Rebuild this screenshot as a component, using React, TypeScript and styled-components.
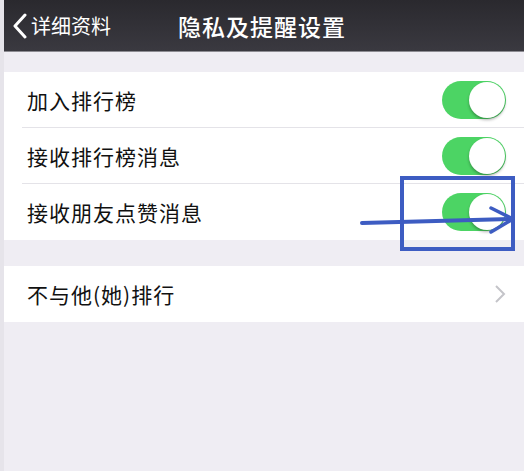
import React from 'react'
import styled, { createGlobalStyle } from 'styled-components'

const Global = createGlobalStyle`
  html, body { margin: 0; padding: 0; background: #efedf3; }
  body { font-family: "Noto Sans CJK SC", "Noto Sans", sans-serif; }
`;

type ToggleItem = { label: string; on: boolean; marked?: boolean };

const toggles: ToggleItem[] = [
    { label: '加入排行榜', on: true },
    { label: '接收排行榜消息', on: true },
    { label: '接收朋友点赞消息', on: true, marked: true },
];

const Switch = ({ on }: { on: boolean }) => (
    <Switch.Track on={on}>
        <Switch.Knob />
    </Switch.Track>
);
Switch.Track = styled.div<{ on: boolean }>`
    width: 64px;
    height: 38px;
    border-radius: 19px;
    background: ${p => (p.on ? '#4cd464' : '#e5e5ea')};
    display: flex;
    justify-content: ${p => (p.on ? 'flex-end' : 'flex-start')};
    align-items: center;
    padding: 1px;
    box-sizing: border-box;
`;
Switch.Knob = styled.div`
    width: 36px;
    height: 36px;
    border-radius: 50%;
    background: #fff;
    box-shadow: 0 2px 3px rgba(0, 0, 0, 0.3);
`;

// blue highlight box + arrow drawn over the third row
const Annotation = () => (
    <Annotation.Box>
        <Annotation.Arrow viewBox="0 0 160 44" width="160" height="44">
            <path d="M2 26 L150 22" stroke="#3d5cc2" strokeWidth="4" strokeLinecap="round" fill="none" />
            <path d="M131 11 L153 22 L131 35" stroke="#3d5cc2" strokeWidth="3.5" strokeLinejoin="round" strokeLinecap="round" fill="none" />
        </Annotation.Arrow>
    </Annotation.Box>
);
Annotation.Box = styled.div`
    position: absolute;
    left: 378px;
    top: -8px;
    width: 115px;
    height: 75px;
    border: 4px solid #3d5cc2;
    box-sizing: border-box;
    pointer-events: none;
`;
Annotation.Arrow = styled.svg`
    position: absolute;
    left: -44px;
    top: 17px;
    overflow: visible;
`;

export default function App() {
    return (
        <>
            <Global />
            <Page>
                <NavBar>
                    <Back>
                        <svg width="16" height="26" viewBox="0 0 16 26">
                            <path d="M13 2 L3 13 L13 24" stroke="#fff" strokeWidth="3" fill="none" strokeLinecap="round" strokeLinejoin="round" />
                        </svg>
                        <span>详细资料</span>
                    </Back>
                    <Title>隐私及提醒设置</Title>
                </NavBar>
                <Group>
                    {toggles.map((t, i) => (
                        <Row key={t.label} last={i === toggles.length - 1}>
                            <Label>{t.label}</Label>
                            <Switch on={t.on} />
                            {t.marked && <Annotation />}
                        </Row>
                    ))}
                </Group>
                <Group>
                    <Row last>
                        <Label>不与他(她)排行</Label>
                        <svg width="12" height="20" viewBox="0 0 12 20">
                            <path d="M2 2 L10 10 L2 18" stroke="#c4c4c9" strokeWidth="2" fill="none" />
                        </svg>
                    </Row>
                </Group>
            </Page>
        </>
    );
}

const Page = styled.div`
    width: 524px;
    height: 471px;
    background: #efedf3;
    display: flex;
    flex-direction: column;
    gap: 20px;
    overflow: hidden;
    border-left: 4px solid #e6e4ea;
    box-sizing: border-box;
`;

const NavBar = styled.div`
    height: 51px;
    margin-left: -4px;
    background: linear-gradient(#2a292e, #3a3940);
    border-bottom: 1px solid #8d8c92;
    display: flex;
    align-items: center;
    justify-content: center;
    position: relative;
    flex-shrink: 0;
`;

const Back = styled.div`
    position: absolute;
    left: 12px;
    top: 0;
    bottom: 0;
    display: flex;
    align-items: center;
    gap: 3px;
    color: #fff;
    font-size: 20px;
`;

const Title = styled.div`
    color: #fff;
    font-size: 23px;
    font-weight: 500;
    letter-spacing: 1px;
`;

const Group = styled.div`
    background: #fff;
    display: flex;
    flex-direction: column;
    margin-bottom: 6px;
`;

const Row = styled.div<{ last?: boolean }>`
    height: 56px;
    margin-left: 18px;
    padding: 0 18px 0 5px;
    display: flex;
    align-items: center;
    justify-content: space-between;
    position: relative;
    border-bottom: ${p => (p.last ? 'none' : '1px solid #e4e3e8')};
    box-sizing: border-box;
`;

const Label = styled.div`
    font-size: 21px;
    letter-spacing: 1px;
    color: #111;
`;
